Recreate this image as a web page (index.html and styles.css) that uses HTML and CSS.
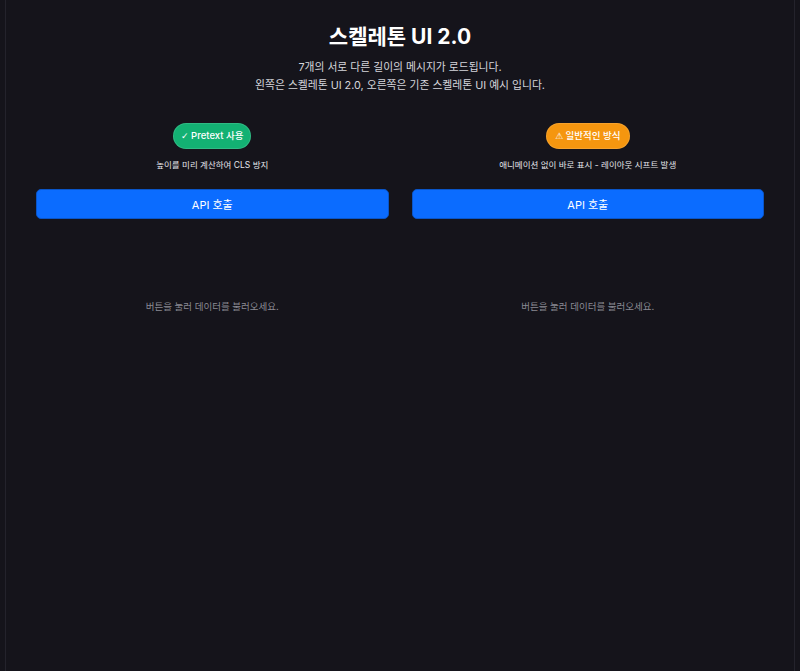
FILE: index.html
```html
<!DOCTYPE html>
<html lang="ko">
	<head>
		<meta charset="UTF-8" />
		<meta name="viewport" content="width=device-width, initial-scale=1.0" />
		<title>스켈레톤 UI 2.0</title>
		<link rel="stylesheet" href="styles.css">
	</head>
	<body>
		<div class="frame">
			<header class="intro">
				<h1>스켈레톤 UI 2.0</h1>
				<p>7개의 서로 다른 길이의 메시지가 로드됩니다.</p>
				<p>왼쪽은 스켈레톤 UI 2.0, 오른쪽은 기존 스켈레톤 UI 예시 입니다.</p>
			</header>

			<div class="compare">
				<section class="panel">
					<span class="badge badge-good"><span class="glyph">✓</span> Pretext 사용</span>
					<p class="desc">높이를 미리 계산하여 CLS 방지</p>
					<button type="button" class="fetch">API 호출</button>
					<p class="empty">버튼을 눌러 데이터를 불러오세요.</p>
				</section>

				<section class="panel">
					<span class="badge badge-warn"><span class="glyph">⚠</span> 일반적인 방식</span>
					<p class="desc">애니메이션 없이 바로 표시 - 레이아웃 시프트 발생</p>
					<button type="button" class="fetch">API 호출</button>
					<p class="empty">버튼을 눌러 데이터를 불러오세요.</p>
				</section>
			</div>
		</div>
	</body>
</html>
```

FILE: styles.css
```css
/* 기본 스타일 */
body {
	margin: 0;
	background-color: #15141b;
	color: #f2f2f5;
	font-family: 'Inter', 'Noto Sans CJK KR', sans-serif;
	min-height: 100vh;
}

.frame {
	margin: 0 5px;
	min-height: 671px;
	border-left: 1px solid #24232c;
	border-right: 1px solid #24232c;
	padding: 20px 30px;
	box-sizing: border-box;
}

.intro {
	text-align: center;
}

.intro h1 {
	margin: 0 0 5px;
	font-size: 21px;
	font-weight: 700;
	line-height: 34px;
	color: #ffffff;
}

.intro p {
	margin: 0;
	font-size: 10.8px;
	line-height: 18px;
	color: #d6d6dc;
}

.compare {
	display: grid;
	grid-template-columns: 1fr 1fr;
	gap: 23px;
	margin-top: 28px;
}

.panel {
	display: flex;
	flex-direction: column;
	align-items: center;
}

/* 상태 배지 */
.badge {
	display: inline-block;
	height: 26px;
	line-height: 26px;
	padding: 0 8px;
	border-radius: 13px;
	font-size: 9.5px;
	font-weight: 500;
	color: #fff;
	box-sizing: border-box;
	box-shadow: inset 0 0 0 1px rgba(255, 255, 255, 0.12);
}

.badge .glyph {
	font-family: 'DejaVu Sans', sans-serif;
	font-weight: 400;
	font-size: 9px;
}

.badge-good {
	background: #13b173;
}

.badge-warn {
	background: #f5960f;
	padding: 0 9px;
}

.desc {
	margin: 8px 0 0;
	font-size: 8.5px;
	line-height: 16px;
	color: #e4e4ea;
}

.fetch {
	margin-top: 16px;
	width: 100%;
	height: 30px;
	border: 1px solid #0a55c8;
	border-radius: 5px;
	background-color: #0b6cff;
	color: #fff;
	font-family: inherit;
	font-size: 11px;
	cursor: pointer;
}

.fetch:hover {
	background-color: #0a5fe0;
}

.empty {
	margin: 81px 0 0;
	font-size: 9.5px;
	line-height: 14px;
	color: #8a8a93;
}
```
